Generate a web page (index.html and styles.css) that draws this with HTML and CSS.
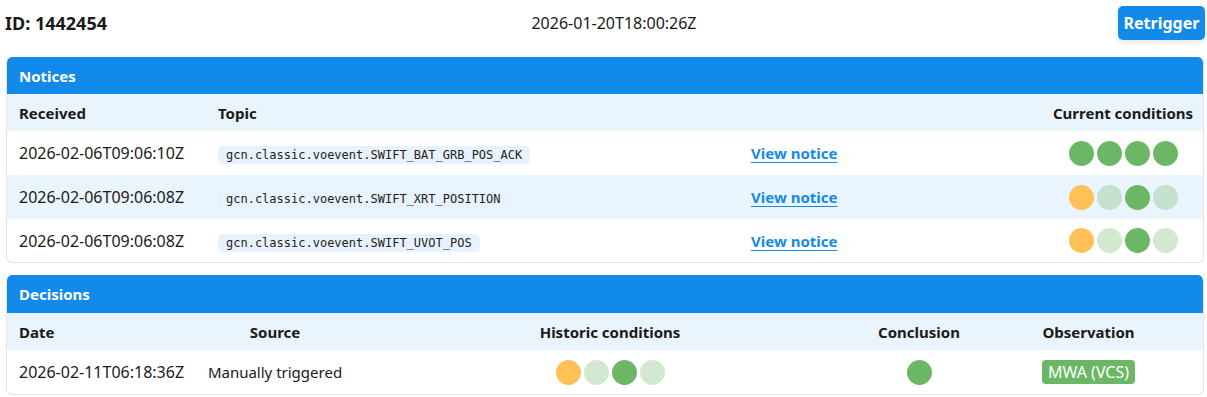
FILE: index.html
```html
<!DOCTYPE html>
<html lang="en">
<head>
    <meta charset="UTF-8">
    <title>Event 1442454</title>
    <link rel="stylesheet" href="styles.css">
</head>
<body>
    <div class="page">
        <div class="top-bar">
            <div class="event-id">ID: 1442454</div>
            <div class="event-time">2026-01-20T18:00:26Z</div>
            <div class="actions">
                <button class="retrigger">Retrigger</button>
            </div>
        </div>

        <div class="card">
            <div class="card-header">Notices</div>
            <table class="grid notices">
                <colgroup>
                    <col style="width: 199px">
                    <col style="width: 533px">
                    <col style="width: 304px">
                    <col>
                </colgroup>
                <thead>
                    <tr>
                        <th>Received</th>
                        <th>Topic</th>
                        <th></th>
                        <th class="center tight">Current conditions</th>
                    </tr>
                </thead>
                <tbody>
                    <tr>
                        <td class="stamp">2026-02-06T09:06:10Z</td>
                        <td><code class="topic">gcn.classic.voevent.SWIFT_BAT_GRB_POS_ACK</code></td>
                        <td><a href="#" class="notice-link">View notice</a></td>
                        <td class="center">
                            <div class="dots">
                                <span class="dot ok"></span><span class="dot ok"></span><span class="dot ok"></span><span class="dot ok"></span>
                            </div>
                        </td>
                    </tr>
                    <tr class="striped">
                        <td class="stamp">2026-02-06T09:06:08Z</td>
                        <td><code class="topic">gcn.classic.voevent.SWIFT_XRT_POSITION</code></td>
                        <td><a href="#" class="notice-link">View notice</a></td>
                        <td class="center">
                            <div class="dots">
                                <span class="dot warn"></span><span class="dot faint"></span><span class="dot ok"></span><span class="dot faint"></span>
                            </div>
                        </td>
                    </tr>
                    <tr>
                        <td class="stamp">2026-02-06T09:06:08Z</td>
                        <td><code class="topic">gcn.classic.voevent.SWIFT_UVOT_POS</code></td>
                        <td><a href="#" class="notice-link">View notice</a></td>
                        <td class="center">
                            <div class="dots">
                                <span class="dot warn"></span><span class="dot faint"></span><span class="dot ok"></span><span class="dot faint"></span>
                            </div>
                        </td>
                    </tr>
                </tbody>
            </table>
        </div>

        <div class="card decisions-card">
            <div class="card-header">Decisions</div>
            <table class="grid decisions">
                <colgroup>
                    <col style="width: 187px">
                    <col style="width: 162px">
                    <col style="width: 508px">
                    <col style="width: 110px">
                    <col>
                </colgroup>
                <thead>
                    <tr>
                        <th>Date</th>
                        <th class="center">Source</th>
                        <th class="center">Historic conditions</th>
                        <th class="center">Conclusion</th>
                        <th class="center">Observation</th>
                    </tr>
                </thead>
                <tbody>
                    <tr>
                        <td class="stamp">2026-02-11T06:18:36Z</td>
                        <td class="center">Manually triggered</td>
                        <td class="center">
                            <div class="dots">
                                <span class="dot warn"></span><span class="dot faint"></span><span class="dot ok"></span><span class="dot faint"></span>
                            </div>
                        </td>
                        <td class="center">
                            <div class="dots"><span class="dot ok"></span></div>
                        </td>
                        <td class="center"><span class="tag">MWA (VCS)</span></td>
                    </tr>
                </tbody>
            </table>
        </div>
    </div>
</body>
</html>
```

FILE: styles.css
```css
* {
    margin: 0;
    padding: 0;
    box-sizing: border-box;
}

body {
    font-family: 'Noto Sans', 'Open Sans', sans-serif;
    font-size: 15px;
    color: #1a1a1a;
    background: #fff;
}

.page {
    padding: 6px 2px 0 6px;
}

/* top line: id, time, action */
.top-bar {
    display: flex;
    align-items: center;
    height: 34px;
    margin-bottom: 17px;
}

.event-id {
    flex: 1;
    font-size: 18px;
    font-weight: bold;
    margin-left: -1px;
}

.event-time {
    font-size: 16px;
    margin-left: 18px;
}

.actions {
    flex: 1;
    display: flex;
    justify-content: flex-end;
}

.retrigger {
    width: 87px;
    height: 34px;
    background: #128ae9;
    color: #fff;
    border: none;
    border-radius: 5px;
    font-family: inherit;
    font-size: 16px;
    font-weight: bold;
    box-shadow: 0 2px 6px rgba(0,0,0,0.12);
}

/* cards */
.card {
    border: 1px solid #e4e4e4;
    border-top: none;
    border-radius: 6px;
    overflow: hidden;
    margin-bottom: 12px;
    margin-right: 1px;
}

.card-header {
    background: #128ae9;
    color: #fff;
    font-weight: bold;
    height: 37px;
    padding: 0 12px;
    display: flex;
    align-items: center;
}

.decisions-card .card-header {
    height: 38px;
}

.grid {
    width: 100%;
    border-collapse: collapse;
    table-layout: fixed;
}

.grid th {
    background: #eaf4fd;
    text-align: left;
    font-weight: bold;
    height: 37px;
    padding: 0 12px;
    white-space: nowrap;
}

.grid th.tight {
    padding: 0;
}

.grid td {
    height: 44px;
    padding: 0 12px;
    white-space: nowrap;
}

.grid td.stamp {
    font-size: 16px;
}

.grid tr.striped td {
    background: #eaf4fd;
}

.grid .center {
    text-align: center;
}

.notices tbody tr:last-child td {
    height: 43px;
}

.topic {
    font-family: 'DejaVu Sans Mono', monospace;
    font-size: 12px;
    background: #e8f2fc;
    padding: 2px 8px;
    border-radius: 5px;
    color: #222;
}

.notice-link {
    color: #128ae9;
    font-weight: bold;
    text-decoration: underline;
    text-underline-offset: 3px;
}

.dots {
    display: inline-flex;
    gap: 3px;
    vertical-align: middle;
}

.dot {
    width: 25px;
    height: 25px;
    border-radius: 50%;
    display: inline-block;
}

.dot.ok {
    background: #6bb765;
}

.dot.faint {
    background: rgba(107, 183, 101, 0.3);
}

.dot.warn {
    background: #ffc157;
}

.tag {
    display: inline-block;
    background: #6bb765;
    color: #fff;
    padding: 1px 6px;
    border-radius: 4px;
    font-size: 16px;
}
```
